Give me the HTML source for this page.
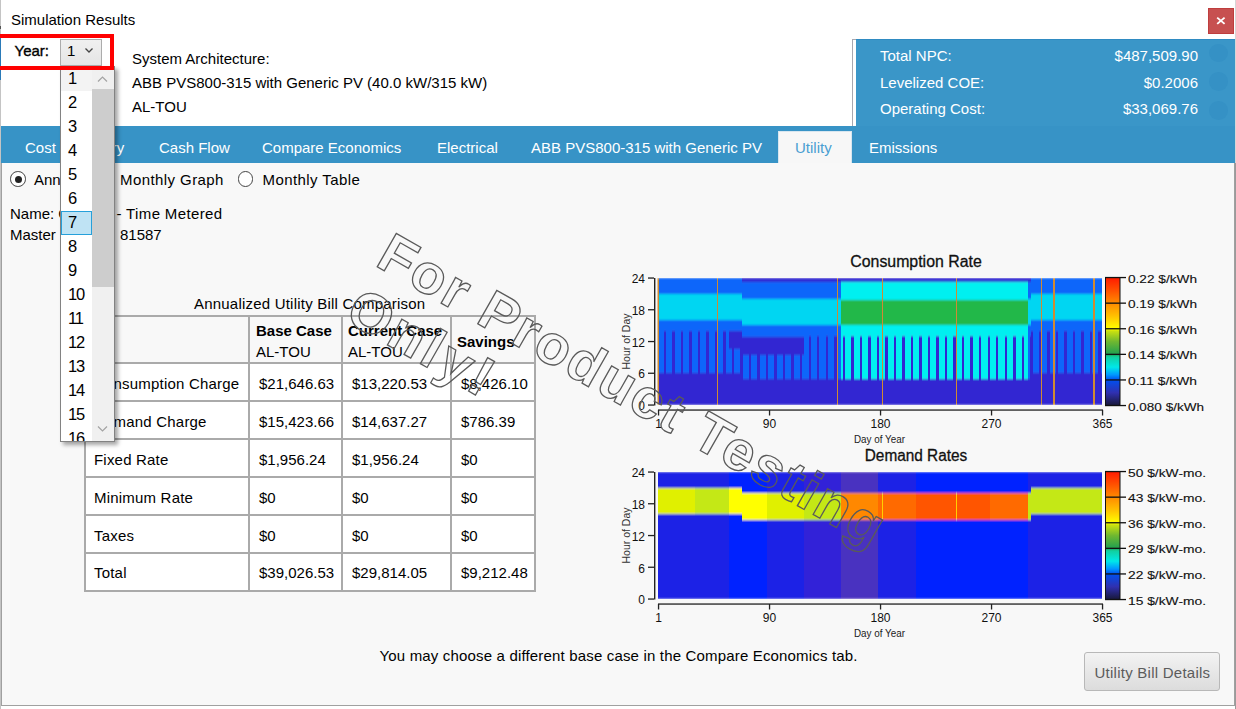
<!DOCTYPE html>
<html><head><meta charset="utf-8">
<style>
html,body{margin:0;padding:0;}
body{width:1236px;height:709px;overflow:hidden;position:relative;background:#fff;font-family:"Liberation Sans",sans-serif;font-size:15px;color:#000;}
.a{position:absolute;white-space:nowrap;line-height:15px;}
.w{color:#fff;}
</style></head><body>
<div style="position:absolute;left:0px;top:0px;width:1px;height:709px;background:#c4c4c4;"></div>
<div style="position:absolute;left:1235px;top:0px;width:1px;height:163px;background:#d6d6d6;"></div>
<div style="position:absolute;left:1235px;top:163px;width:1px;height:546px;background:#9a9a9a;"></div>
<div style="position:absolute;left:0px;top:34px;width:1px;height:46px;background:#2a7ab8;"></div>
<div style="position:absolute;left:0px;top:26px;width:1px;height:3px;background:#555;"></div>
<div class="a" style="left:11px;top:11.8px;font-size:15px;line-height:15px;">Simulation Results</div>
<div style="position:absolute;left:1208px;top:8px;width:24px;height:24px;background:#c75050;border:1px solid #bf3d3d;"></div>
<svg style="position:absolute;left:1216px;top:16px" width="10" height="10"><path d="M1.2 1.6L8.6 7.9M8.6 1.6L1.2 7.9" stroke="#fff" stroke-width="1.9"/></svg>
<div style="position:absolute;left:852px;top:39px;width:1px;height:87px;background:#a8a8b0;"></div>
<div style="position:absolute;left:852px;top:39px;width:4px;height:1px;background:#a8a8b0;"></div>
<div style="position:absolute;left:856px;top:39px;width:379px;height:87px;background:#3a96c8;border-top:1px solid #2f8bc2;box-sizing:border-box;"></div>
<div class="a" style="left:880px;top:48.3px;font-size:15px;line-height:15px;color:#fff;">Total NPC:</div>
<div class="a" style="right:38px;top:48.3px;font-size:15px;line-height:15px;color:#fff;">$487,509.90</div>
<div class="a" style="left:880px;top:74.8px;font-size:15px;line-height:15px;color:#fff;">Levelized COE:</div>
<div class="a" style="right:38px;top:74.8px;font-size:15px;line-height:15px;color:#fff;">$0.2006</div>
<div class="a" style="left:880px;top:101.3px;font-size:15px;line-height:15px;color:#fff;">Operating Cost:</div>
<div class="a" style="right:38px;top:101.3px;font-size:15px;line-height:15px;color:#fff;">$33,069.76</div>
<div style="position:absolute;left:1209.3px;top:43.7px;width:18.6px;height:18.6px;border-radius:50%;background:#3591c5"></div>
<div style="position:absolute;left:1209.3px;top:72.4px;width:18.6px;height:18.6px;border-radius:50%;background:#3591c5"></div>
<div style="position:absolute;left:1209.3px;top:101.1px;width:18.6px;height:18.6px;border-radius:50%;background:#3591c5"></div>
<div class="a" style="left:132px;top:51.3px;font-size:15px;line-height:15px;">System Architecture:</div>
<div class="a" style="left:132px;top:75.3px;font-size:15px;line-height:15px;">ABB PVS800-315 with Generic PV (40.0 kW/315 kW)</div>
<div class="a" style="left:132px;top:98.8px;font-size:15px;line-height:15px;">AL-TOU</div>
<div style="position:absolute;left:1px;top:126px;width:1234px;height:37px;background:#3793c6;"></div>
<div class="a" style="left:25px;top:140.3px;font-size:15px;line-height:15px;color:#fff;">Cost Summary</div>
<div class="a" style="left:159px;top:140.3px;font-size:15px;line-height:15px;color:#fff;">Cash Flow</div>
<div class="a" style="left:262px;top:140.3px;font-size:15px;line-height:15px;color:#fff;">Compare Economics</div>
<div class="a" style="left:437px;top:140.3px;font-size:15px;line-height:15px;color:#fff;">Electrical</div>
<div class="a" style="left:531px;top:140.3px;font-size:15px;line-height:15px;color:#fff;">ABB PVS800-315 with Generic PV</div>
<div class="a" style="left:869px;top:140.3px;font-size:15px;line-height:15px;color:#fff;">Emissions</div>
<div style="position:absolute;left:778px;top:131px;width:74px;height:32px;background:#f7f7f7;border:1px solid #d8e6ef;border-bottom:none;box-sizing:border-box;"></div>
<div class="a" style="left:795px;top:140.3px;font-size:15px;line-height:15px;color:#4a9fd2;">Utility</div>
<div style="position:absolute;left:1px;top:163px;width:1234px;height:543px;background:#f8f8f8;border-right:1px solid #a0a0a0;border-bottom:1px solid #a0a0a0;border-left:1px solid #a0a0a0;box-sizing:border-box;"></div>
<div style="position:absolute;left:10.2px;top:171.2px;width:13.6px;height:13.6px;border:1px solid #444;border-radius:50%;background:#fff"></div>
<div style="position:absolute;left:14.5px;top:175.5px;width:7px;height:7px;border-radius:50%;background:#222"></div>
<div class="a" style="left:34px;top:171.8px;font-size:15px;line-height:15px;">Annualized</div>
<div style="position:absolute;left:96.2px;top:171.2px;width:13.6px;height:13.6px;border:1px solid #444;border-radius:50%;background:#fff"></div>
<div class="a" style="left:120px;top:171.8px;font-size:15px;line-height:15px;letter-spacing:0.42px;">Monthly Graph</div>
<div style="position:absolute;left:237.7px;top:171.2px;width:13.6px;height:13.6px;border:1px solid #444;border-radius:50%;background:#fff"></div>
<div class="a" style="left:262.5px;top:171.8px;font-size:15px;line-height:15px;letter-spacing:0.42px;">Monthly Table</div>
<div class="a" style="left:10px;top:205.8px;font-size:15px;line-height:15px;">Name: General</div>
<div class="a" style="left:116.5px;top:205.8px;font-size:15px;line-height:15px;letter-spacing:0.36px;">- Time Metered</div>
<div class="a" style="left:10px;top:226.8px;font-size:15px;line-height:15px;">Master ID</div>
<div class="a" style="left:120px;top:226.8px;font-size:15px;line-height:15px;">81587</div>
<div class="a" style="left:194px;top:295.8px;font-size:15px;line-height:15px;letter-spacing:0.21px;">Annualized Utility Bill Comparison</div>
<div style="position:absolute;left:84px;top:315px;width:452px;height:277px;background:#fff;border:2px solid #aaa;box-sizing:border-box;"></div>
<div style="position:absolute;left:86px;top:317px;width:448px;height:45px;background:#f8f8f8;"></div>
<div style="position:absolute;left:248px;top:315px;width:2px;height:277px;background:#aaa;"></div>
<div style="position:absolute;left:341px;top:315px;width:2px;height:277px;background:#aaa;"></div>
<div style="position:absolute;left:450px;top:315px;width:2px;height:277px;background:#aaa;"></div>
<div style="position:absolute;left:84px;top:362px;width:452px;height:2px;background:#aaa;"></div>
<div style="position:absolute;left:84px;top:400px;width:452px;height:2px;background:#aaa;"></div>
<div style="position:absolute;left:84px;top:438px;width:452px;height:2px;background:#aaa;"></div>
<div style="position:absolute;left:84px;top:476px;width:452px;height:2px;background:#aaa;"></div>
<div style="position:absolute;left:84px;top:514px;width:452px;height:2px;background:#aaa;"></div>
<div style="position:absolute;left:84px;top:552px;width:452px;height:2px;background:#aaa;"></div>
<div class="a" style="left:256px;top:322.8px;font-size:15px;line-height:15px;font-weight:bold;">Base Case</div>
<div class="a" style="left:256px;top:343.8px;font-size:15px;line-height:15px;">AL-TOU</div>
<div class="a" style="left:348px;top:322.8px;font-size:15px;line-height:15px;font-weight:bold;">Current Case</div>
<div class="a" style="left:348px;top:343.8px;font-size:15px;line-height:15px;">AL-TOU</div>
<div class="a" style="left:457px;top:333.8px;font-size:15px;line-height:15px;font-weight:bold;">Savings</div>
<div class="a" style="left:94px;top:375.9px;font-size:15px;line-height:15px;letter-spacing:0.2px;">Consumption Charge</div>
<div class="a" style="left:259px;top:375.9px;font-size:15px;line-height:15px;">$21,646.63</div>
<div class="a" style="left:352px;top:375.9px;font-size:15px;line-height:15px;">$13,220.53</div>
<div class="a" style="left:461px;top:375.9px;font-size:15px;line-height:15px;">$8,426.10</div>
<div class="a" style="left:94px;top:413.8px;font-size:15px;line-height:15px;letter-spacing:0.2px;">Demand Charge</div>
<div class="a" style="left:259px;top:413.8px;font-size:15px;line-height:15px;">$15,423.66</div>
<div class="a" style="left:352px;top:413.8px;font-size:15px;line-height:15px;">$14,637.27</div>
<div class="a" style="left:461px;top:413.8px;font-size:15px;line-height:15px;">$786.39</div>
<div class="a" style="left:94px;top:451.7px;font-size:15px;line-height:15px;letter-spacing:0.2px;">Fixed Rate</div>
<div class="a" style="left:259px;top:451.7px;font-size:15px;line-height:15px;">$1,956.24</div>
<div class="a" style="left:352px;top:451.7px;font-size:15px;line-height:15px;">$1,956.24</div>
<div class="a" style="left:461px;top:451.7px;font-size:15px;line-height:15px;">$0</div>
<div class="a" style="left:94px;top:489.6px;font-size:15px;line-height:15px;letter-spacing:0.2px;">Minimum Rate</div>
<div class="a" style="left:259px;top:489.6px;font-size:15px;line-height:15px;">$0</div>
<div class="a" style="left:352px;top:489.6px;font-size:15px;line-height:15px;">$0</div>
<div class="a" style="left:461px;top:489.6px;font-size:15px;line-height:15px;">$0</div>
<div class="a" style="left:94px;top:527.5px;font-size:15px;line-height:15px;letter-spacing:0.2px;">Taxes</div>
<div class="a" style="left:259px;top:527.5px;font-size:15px;line-height:15px;">$0</div>
<div class="a" style="left:352px;top:527.5px;font-size:15px;line-height:15px;">$0</div>
<div class="a" style="left:461px;top:527.5px;font-size:15px;line-height:15px;">$0</div>
<div class="a" style="left:94px;top:565.4px;font-size:15px;line-height:15px;letter-spacing:0.2px;">Total</div>
<div class="a" style="left:259px;top:565.4px;font-size:15px;line-height:15px;">$39,026.53</div>
<div class="a" style="left:352px;top:565.4px;font-size:15px;line-height:15px;">$29,814.05</div>
<div class="a" style="left:461px;top:565.4px;font-size:15px;line-height:15px;">$9,212.48</div>
<div class="a" style="left:379.5px;top:648.1px;font-size:15px;line-height:15px;letter-spacing:0.17px;">You may choose a different base case in the Compare Economics tab.</div>
<div style="position:absolute;left:1084px;top:652px;width:136px;height:39px;background:linear-gradient(#f3f3f3,#dcdcdc);border:1px solid #b8b8b8;border-radius:3px;box-sizing:border-box;"></div>
<div class="a" style="left:1094.5px;top:664.8px;font-size:15px;line-height:15px;color:#5c5c5c;letter-spacing:0.25px;">Utility Bill Details</div>
<svg style="position:absolute;left:0;top:0" width="1236" height="709" font-family="Liberation Sans">
<defs><linearGradient id="cg" x1="0" y1="0" x2="0" y2="1">
<stop offset="0" stop-color="#ff1a00"/>
<stop offset="0.1" stop-color="#ff5000"/>
<stop offset="0.2" stop-color="#ff8a00"/>
<stop offset="0.3" stop-color="#ffc000"/>
<stop offset="0.4" stop-color="#ffff00"/>
<stop offset="0.42" stop-color="#c8e010"/>
<stop offset="0.5" stop-color="#70b830"/>
<stop offset="0.6" stop-color="#20a050"/>
<stop offset="0.62" stop-color="#10d0a0"/>
<stop offset="0.7" stop-color="#00e8e8"/>
<stop offset="0.76" stop-color="#0098ff"/>
<stop offset="0.8" stop-color="#0050f0"/>
<stop offset="0.9" stop-color="#3030b0"/>
<stop offset="1" stop-color="#181838"/>
</linearGradient></defs>
<defs><filter id="bl" x="-5%" y="-5%" width="110%" height="110%"><feGaussianBlur stdDeviation="0.3 1.3"/></filter><clipPath id="c1"><rect x="657.5" y="278" width="444.5" height="127"/></clipPath><clipPath id="c2"><rect x="657.5" y="472" width="444.5" height="127"/></clipPath></defs>
<g clip-path="url(#c1)"><g filter="url(#bl)" shape-rendering="crispEdges">
<rect x="657.50" y="373.25" width="71.85" height="31.75" fill="#3028d2"/>
<rect x="657.50" y="330.92" width="71.85" height="42.33" fill="#0866fa"/>
<rect x="657.50" y="320.33" width="71.85" height="10.58" fill="#0866fa"/>
<rect x="657.50" y="293.88" width="71.85" height="26.46" fill="#00d6f2"/>
<rect x="657.50" y="278.00" width="71.85" height="15.88" fill="#0866fa"/>
<rect x="663.59" y="330.92" width="2.44" height="42.33" fill="#3028d2"/>
<rect x="672.11" y="330.92" width="2.44" height="42.33" fill="#3028d2"/>
<rect x="680.64" y="330.92" width="2.44" height="42.33" fill="#3028d2"/>
<rect x="689.16" y="330.92" width="2.44" height="42.33" fill="#3028d2"/>
<rect x="697.69" y="330.92" width="2.44" height="42.33" fill="#3028d2"/>
<rect x="706.21" y="330.92" width="2.44" height="42.33" fill="#3028d2"/>
<rect x="714.74" y="330.92" width="2.44" height="42.33" fill="#3028d2"/>
<rect x="723.26" y="330.92" width="2.44" height="42.33" fill="#3028d2"/>
<rect x="729.35" y="373.25" width="12.18" height="31.75" fill="#3028d2"/>
<rect x="729.35" y="349.44" width="12.18" height="23.81" fill="#0866fa"/>
<rect x="729.35" y="330.92" width="12.18" height="18.52" fill="#3028d2"/>
<rect x="729.35" y="320.33" width="12.18" height="10.58" fill="#0866fa"/>
<rect x="729.35" y="293.88" width="12.18" height="26.46" fill="#00d6f2"/>
<rect x="729.35" y="278.00" width="12.18" height="15.88" fill="#0866fa"/>
<rect x="731.79" y="349.44" width="2.44" height="23.81" fill="#3028d2"/>
<rect x="740.31" y="349.44" width="1.22" height="23.81" fill="#3028d2"/>
<rect x="741.53" y="378.54" width="62.11" height="26.46" fill="#3028d2"/>
<rect x="741.53" y="354.73" width="62.11" height="23.81" fill="#0866fa"/>
<rect x="741.53" y="337.27" width="62.11" height="17.46" fill="#3028d2"/>
<rect x="741.53" y="324.57" width="62.11" height="12.70" fill="#0866fa"/>
<rect x="741.53" y="299.17" width="62.11" height="25.40" fill="#00d6f2"/>
<rect x="741.53" y="282.23" width="62.11" height="16.93" fill="#0866fa"/>
<rect x="741.53" y="278.00" width="62.11" height="4.23" fill="#3028d2"/>
<rect x="741.53" y="354.73" width="1.22" height="23.81" fill="#3028d2"/>
<rect x="748.84" y="354.73" width="2.44" height="23.81" fill="#3028d2"/>
<rect x="757.36" y="354.73" width="2.44" height="23.81" fill="#3028d2"/>
<rect x="765.88" y="354.73" width="2.44" height="23.81" fill="#3028d2"/>
<rect x="774.41" y="354.73" width="2.44" height="23.81" fill="#3028d2"/>
<rect x="782.93" y="354.73" width="2.44" height="23.81" fill="#3028d2"/>
<rect x="791.46" y="354.73" width="2.44" height="23.81" fill="#3028d2"/>
<rect x="799.98" y="354.73" width="2.44" height="23.81" fill="#3028d2"/>
<rect x="803.64" y="378.54" width="37.75" height="26.46" fill="#3028d2"/>
<rect x="803.64" y="336.21" width="37.75" height="42.33" fill="#0866fa"/>
<rect x="803.64" y="324.57" width="37.75" height="11.64" fill="#0866fa"/>
<rect x="803.64" y="299.17" width="37.75" height="25.40" fill="#00d6f2"/>
<rect x="803.64" y="282.23" width="37.75" height="16.93" fill="#0866fa"/>
<rect x="803.64" y="278.00" width="37.75" height="4.23" fill="#3028d2"/>
<rect x="808.51" y="336.21" width="2.44" height="42.33" fill="#3028d2"/>
<rect x="817.03" y="336.21" width="2.44" height="42.33" fill="#3028d2"/>
<rect x="825.56" y="336.21" width="2.44" height="42.33" fill="#3028d2"/>
<rect x="834.08" y="336.21" width="2.44" height="42.33" fill="#3028d2"/>
<rect x="841.39" y="378.54" width="186.32" height="26.46" fill="#3028d2"/>
<rect x="841.39" y="336.21" width="186.32" height="42.33" fill="#00f0f0"/>
<rect x="841.39" y="324.57" width="186.32" height="11.64" fill="#00f0f0"/>
<rect x="841.39" y="299.70" width="186.32" height="24.87" fill="#22b84a"/>
<rect x="841.39" y="282.23" width="186.32" height="17.46" fill="#00f0f0"/>
<rect x="841.39" y="278.00" width="186.32" height="4.23" fill="#3028d2"/>
<rect x="842.61" y="336.21" width="2.44" height="42.33" fill="#3028d2"/>
<rect x="851.13" y="336.21" width="2.44" height="42.33" fill="#3028d2"/>
<rect x="859.66" y="336.21" width="2.44" height="42.33" fill="#3028d2"/>
<rect x="868.18" y="336.21" width="2.44" height="42.33" fill="#3028d2"/>
<rect x="876.71" y="336.21" width="2.44" height="42.33" fill="#3028d2"/>
<rect x="885.23" y="336.21" width="2.44" height="42.33" fill="#3028d2"/>
<rect x="893.75" y="336.21" width="2.44" height="42.33" fill="#3028d2"/>
<rect x="902.28" y="336.21" width="2.44" height="42.33" fill="#3028d2"/>
<rect x="910.80" y="336.21" width="2.44" height="42.33" fill="#3028d2"/>
<rect x="919.33" y="336.21" width="2.44" height="42.33" fill="#3028d2"/>
<rect x="927.85" y="336.21" width="2.44" height="42.33" fill="#3028d2"/>
<rect x="936.38" y="336.21" width="2.44" height="42.33" fill="#3028d2"/>
<rect x="944.90" y="336.21" width="2.44" height="42.33" fill="#3028d2"/>
<rect x="953.43" y="336.21" width="2.44" height="42.33" fill="#3028d2"/>
<rect x="961.95" y="336.21" width="2.44" height="42.33" fill="#3028d2"/>
<rect x="970.48" y="336.21" width="2.44" height="42.33" fill="#3028d2"/>
<rect x="979.00" y="336.21" width="2.44" height="42.33" fill="#3028d2"/>
<rect x="987.53" y="336.21" width="2.44" height="42.33" fill="#3028d2"/>
<rect x="996.05" y="336.21" width="2.44" height="42.33" fill="#3028d2"/>
<rect x="1004.58" y="336.21" width="2.44" height="42.33" fill="#3028d2"/>
<rect x="1013.10" y="336.21" width="2.44" height="42.33" fill="#3028d2"/>
<rect x="1021.62" y="336.21" width="2.44" height="42.33" fill="#3028d2"/>
<rect x="1027.71" y="378.54" width="3.65" height="26.46" fill="#3028d2"/>
<rect x="1027.71" y="336.21" width="3.65" height="42.33" fill="#0866fa"/>
<rect x="1027.71" y="324.57" width="3.65" height="11.64" fill="#0866fa"/>
<rect x="1027.71" y="299.17" width="3.65" height="25.40" fill="#00d6f2"/>
<rect x="1027.71" y="282.23" width="3.65" height="16.93" fill="#0866fa"/>
<rect x="1027.71" y="278.00" width="3.65" height="4.23" fill="#3028d2"/>
<rect x="1030.15" y="336.21" width="1.22" height="42.33" fill="#3028d2"/>
<rect x="1031.37" y="373.25" width="70.63" height="31.75" fill="#3028d2"/>
<rect x="1031.37" y="330.92" width="70.63" height="42.33" fill="#0866fa"/>
<rect x="1031.37" y="320.33" width="70.63" height="10.58" fill="#0866fa"/>
<rect x="1031.37" y="293.88" width="70.63" height="26.46" fill="#00d6f2"/>
<rect x="1031.37" y="278.00" width="70.63" height="15.88" fill="#0866fa"/>
<rect x="1031.37" y="330.92" width="1.22" height="42.33" fill="#3028d2"/>
<rect x="1038.67" y="330.92" width="2.44" height="42.33" fill="#3028d2"/>
<rect x="1047.20" y="330.92" width="2.44" height="42.33" fill="#3028d2"/>
<rect x="1055.72" y="330.92" width="2.44" height="42.33" fill="#3028d2"/>
<rect x="1064.25" y="330.92" width="2.44" height="42.33" fill="#3028d2"/>
<rect x="1072.77" y="330.92" width="2.44" height="42.33" fill="#3028d2"/>
<rect x="1081.30" y="330.92" width="2.44" height="42.33" fill="#3028d2"/>
<rect x="1089.82" y="330.92" width="2.44" height="42.33" fill="#3028d2"/>
<rect x="1098.35" y="330.92" width="2.44" height="42.33" fill="#3028d2"/>
<rect x="657.48" y="278" width="1.25" height="127" fill="#d08a30"/>
<rect x="717.16" y="278" width="1.25" height="127" fill="#d08a30"/>
<rect x="836.50" y="278" width="1.25" height="127" fill="#d08a30"/>
<rect x="881.56" y="278" width="1.25" height="127" fill="#d08a30"/>
<rect x="955.85" y="278" width="1.25" height="127" fill="#d08a30"/>
<rect x="1041.09" y="278" width="1.25" height="127" fill="#d08a30"/>
<rect x="1053.27" y="278" width="1.25" height="127" fill="#d08a30"/>
<rect x="1093.46" y="278" width="1.25" height="127" fill="#d08a30"/>
</g></g>
<text x="916" y="267.2" font-size="16" text-anchor="middle" textLength="131.5" lengthAdjust="spacingAndGlyphs" fill="#111" stroke="#111" stroke-width="0.3">Consumption Rate</text>
<rect x="654" y="278" width="1.4" height="127.5" fill="#222"/>
<rect x="648" y="404.4" width="6" height="1.3" fill="#222"/>
<text x="645" y="410.2" font-size="12" text-anchor="end" fill="#111">0</text>
<rect x="648" y="372.6" width="6" height="1.3" fill="#222"/>
<text x="645" y="378.4" font-size="12" text-anchor="end" fill="#111">6</text>
<rect x="648" y="340.9" width="6" height="1.3" fill="#222"/>
<text x="645" y="346.7" font-size="12" text-anchor="end" fill="#111">12</text>
<rect x="648" y="309.1" width="6" height="1.3" fill="#222"/>
<text x="645" y="314.9" font-size="12" text-anchor="end" fill="#111">18</text>
<rect x="648" y="277.4" width="6" height="1.3" fill="#222"/>
<text x="645" y="283.2" font-size="12" text-anchor="end" fill="#111">24</text>
<text x="630" y="341.5" font-size="10.5" text-anchor="middle" fill="#333" transform="rotate(-90 630 341.5)" textLength="56" lengthAdjust="spacingAndGlyphs">Hour of Day</text>
<rect x="658" y="409.4" width="445" height="1.3" fill="#222"/>
<rect x="657.9" y="410" width="1.3" height="5.5" fill="#222"/>
<text x="658.5" y="428.0" font-size="12" text-anchor="middle" fill="#111">1</text>
<rect x="768.9" y="410" width="1.3" height="5.5" fill="#222"/>
<text x="769.5" y="428.0" font-size="12" text-anchor="middle" fill="#111">90</text>
<rect x="879.9" y="410" width="1.3" height="5.5" fill="#222"/>
<text x="880.5" y="428.0" font-size="12" text-anchor="middle" fill="#111">180</text>
<rect x="990.9" y="410" width="1.3" height="5.5" fill="#222"/>
<text x="991.5" y="428.0" font-size="12" text-anchor="middle" fill="#111">270</text>
<rect x="1101.9" y="410" width="1.3" height="5.5" fill="#222"/>
<text x="1102.5" y="428.0" font-size="12" text-anchor="middle" fill="#111">365</text>
<text x="879.5" y="442.8" font-size="10.5" text-anchor="middle" fill="#222" textLength="51" lengthAdjust="spacingAndGlyphs">Day of Year</text>
<rect x="1105.5" y="277.5" width="14.5" height="128" fill="url(#cg)" stroke="#111" stroke-width="1"/>
<rect x="1105" y="276.9" width="21" height="1.3" fill="#111"/>
<text x="1128" y="282.5" font-size="11.6" stroke="#111" stroke-width="0.12" fill="#111" textLength="69" lengthAdjust="spacingAndGlyphs">0.22 $/kWh</text>
<rect x="1105" y="302.5" width="21" height="1.3" fill="#111"/>
<text x="1128" y="308.1" font-size="11.6" stroke="#111" stroke-width="0.12" fill="#111" textLength="69" lengthAdjust="spacingAndGlyphs">0.19 $/kWh</text>
<rect x="1105" y="328.1" width="21" height="1.3" fill="#111"/>
<text x="1128" y="333.7" font-size="11.6" stroke="#111" stroke-width="0.12" fill="#111" textLength="69" lengthAdjust="spacingAndGlyphs">0.16 $/kWh</text>
<rect x="1105" y="353.7" width="21" height="1.3" fill="#111"/>
<text x="1128" y="359.3" font-size="11.6" stroke="#111" stroke-width="0.12" fill="#111" textLength="69" lengthAdjust="spacingAndGlyphs">0.14 $/kWh</text>
<rect x="1105" y="379.3" width="21" height="1.3" fill="#111"/>
<text x="1128" y="384.9" font-size="11.6" stroke="#111" stroke-width="0.12" fill="#111" textLength="69" lengthAdjust="spacingAndGlyphs">0.11 $/kWh</text>
<rect x="1105" y="404.9" width="21" height="1.3" fill="#111"/>
<text x="1128" y="410.5" font-size="11.6" stroke="#111" stroke-width="0.12" fill="#111" textLength="76" lengthAdjust="spacingAndGlyphs">0.080 $/kWh</text>
<g clip-path="url(#c2)"><g filter="url(#bl)" shape-rendering="crispEdges">
<rect x="657.50" y="472.00" width="71.85" height="127.00" fill="#1c22e6"/>
<rect x="729.35" y="472.00" width="37.75" height="127.00" fill="#0020ff"/>
<rect x="767.10" y="472.00" width="36.53" height="127.00" fill="#1c22e6"/>
<rect x="803.64" y="472.00" width="37.75" height="127.00" fill="#3024d8"/>
<rect x="841.39" y="472.00" width="36.53" height="127.00" fill="#4830c0"/>
<rect x="877.92" y="472.00" width="37.75" height="127.00" fill="#1c22e6"/>
<rect x="915.68" y="472.00" width="112.04" height="127.00" fill="#0020ff"/>
<rect x="1027.71" y="472.00" width="74.29" height="127.00" fill="#1c22e6"/>
<rect x="657.50" y="487.88" width="37.75" height="26.46" fill="#e0f000"/>
<rect x="695.25" y="487.88" width="34.10" height="26.46" fill="#c4e814"/>
<rect x="729.35" y="487.88" width="12.18" height="26.46" fill="#ffff00"/>
<rect x="741.53" y="493.17" width="25.57" height="26.46" fill="#ffff00"/>
<rect x="767.10" y="493.17" width="36.53" height="26.46" fill="#e0f000"/>
<rect x="803.64" y="493.17" width="37.75" height="26.46" fill="#c4e814"/>
<rect x="841.39" y="493.17" width="36.53" height="26.46" fill="#ff8800"/>
<rect x="877.92" y="493.17" width="37.75" height="26.46" fill="#ff6a00"/>
<rect x="915.68" y="493.17" width="74.29" height="26.46" fill="#ff5500"/>
<rect x="989.96" y="493.17" width="37.75" height="26.46" fill="#ff6a00"/>
<rect x="1027.71" y="493.17" width="3.65" height="26.46" fill="#c4e814"/>
<rect x="1031.37" y="487.88" width="70.63" height="26.46" fill="#c4e814"/>
<rect x="881.59" y="493.17" width="1.20" height="26.46" fill="#ffd000"/>
<rect x="955.87" y="493.17" width="1.20" height="26.46" fill="#ffd000"/>
</g></g>
<text x="916" y="461.4" font-size="16" text-anchor="middle" textLength="102.5" lengthAdjust="spacingAndGlyphs" fill="#111" stroke="#111" stroke-width="0.3">Demand Rates</text>
<rect x="654" y="472" width="1.4" height="127.5" fill="#222"/>
<rect x="648" y="598.4" width="6" height="1.3" fill="#222"/>
<text x="645" y="604.2" font-size="12" text-anchor="end" fill="#111">0</text>
<rect x="648" y="566.6" width="6" height="1.3" fill="#222"/>
<text x="645" y="572.5" font-size="12" text-anchor="end" fill="#111">6</text>
<rect x="648" y="534.9" width="6" height="1.3" fill="#222"/>
<text x="645" y="540.7" font-size="12" text-anchor="end" fill="#111">12</text>
<rect x="648" y="503.1" width="6" height="1.3" fill="#222"/>
<text x="645" y="508.9" font-size="12" text-anchor="end" fill="#111">18</text>
<rect x="648" y="471.4" width="6" height="1.3" fill="#222"/>
<text x="645" y="477.2" font-size="12" text-anchor="end" fill="#111">24</text>
<text x="630" y="535.5" font-size="10.5" text-anchor="middle" fill="#333" transform="rotate(-90 630 535.5)" textLength="56" lengthAdjust="spacingAndGlyphs">Hour of Day</text>
<rect x="658" y="603.4" width="445" height="1.3" fill="#222"/>
<rect x="657.9" y="604" width="1.3" height="5.5" fill="#222"/>
<text x="658.5" y="622.0" font-size="12" text-anchor="middle" fill="#111">1</text>
<rect x="768.9" y="604" width="1.3" height="5.5" fill="#222"/>
<text x="769.5" y="622.0" font-size="12" text-anchor="middle" fill="#111">90</text>
<rect x="879.9" y="604" width="1.3" height="5.5" fill="#222"/>
<text x="880.5" y="622.0" font-size="12" text-anchor="middle" fill="#111">180</text>
<rect x="990.9" y="604" width="1.3" height="5.5" fill="#222"/>
<text x="991.5" y="622.0" font-size="12" text-anchor="middle" fill="#111">270</text>
<rect x="1101.9" y="604" width="1.3" height="5.5" fill="#222"/>
<text x="1102.5" y="622.0" font-size="12" text-anchor="middle" fill="#111">365</text>
<text x="879.5" y="636.8" font-size="10.5" text-anchor="middle" fill="#222" textLength="51" lengthAdjust="spacingAndGlyphs">Day of Year</text>
<rect x="1105.5" y="471.5" width="14.5" height="128" fill="url(#cg)" stroke="#111" stroke-width="1"/>
<rect x="1105" y="470.9" width="21" height="1.3" fill="#111"/>
<text x="1128" y="476.5" font-size="11.6" stroke="#111" stroke-width="0.12" fill="#111" textLength="78" lengthAdjust="spacingAndGlyphs">50 $/kW-mo.</text>
<rect x="1105" y="496.5" width="21" height="1.3" fill="#111"/>
<text x="1128" y="502.1" font-size="11.6" stroke="#111" stroke-width="0.12" fill="#111" textLength="78" lengthAdjust="spacingAndGlyphs">43 $/kW-mo.</text>
<rect x="1105" y="522.1" width="21" height="1.3" fill="#111"/>
<text x="1128" y="527.7" font-size="11.6" stroke="#111" stroke-width="0.12" fill="#111" textLength="78" lengthAdjust="spacingAndGlyphs">36 $/kW-mo.</text>
<rect x="1105" y="547.7" width="21" height="1.3" fill="#111"/>
<text x="1128" y="553.3" font-size="11.6" stroke="#111" stroke-width="0.12" fill="#111" textLength="78" lengthAdjust="spacingAndGlyphs">29 $/kW-mo.</text>
<rect x="1105" y="573.3" width="21" height="1.3" fill="#111"/>
<text x="1128" y="578.9" font-size="11.6" stroke="#111" stroke-width="0.12" fill="#111" textLength="78" lengthAdjust="spacingAndGlyphs">22 $/kW-mo.</text>
<rect x="1105" y="598.9" width="21" height="1.3" fill="#111"/>
<text x="1128" y="604.5" font-size="11.6" stroke="#111" stroke-width="0.12" fill="#111" textLength="78" lengthAdjust="spacingAndGlyphs">15 $/kW-mo.</text>
</svg>
<div class="a" style="left:14.5px;top:43.3px;font-size:15px;line-height:15px;-webkit-text-stroke:0.35px #000;">Year:</div>
<div style="position:absolute;left:60px;top:39px;width:42px;height:27px;background:linear-gradient(#f0f0f0,#e5e5e5);border:1px solid #acacac;box-sizing:border-box;"></div>
<div class="a" style="left:67px;top:43.3px;font-size:15px;line-height:15px;">1</div>
<svg style="position:absolute;left:84px;top:47px" width="10" height="8"><path d="M1.5 1.5L5 5L8.5 1.5" stroke="#444" stroke-width="1.3" fill="none"/></svg>
<div style="position:absolute;left:0;top:0;width:1236px;height:709px;"><div style="position:absolute;left:60px;top:66px;width:55px;height:376px;box-shadow:3px 3px 4px rgba(0,0,0,0.35);background:#fff"></div>
<div style="position:absolute;left:60px;top:66px;width:55px;height:376px;background:#fff;border:1px solid #828282;box-sizing:border-box;"></div>
<div style="position:absolute;left:61px;top:67px;width:31px;height:24px;background:#f3f3f3;"></div>
<div style="position:absolute;left:61px;top:211px;width:31px;height:24px;background:#bfe3f4;border:1px solid #26a0da;box-sizing:border-box;"></div>
<div style="position:absolute;left:61px;top:67px;width:31px;height:374px;overflow:hidden"><div class="a" style="left:7px;top:3.3px;font-size:16.5px;line-height:16.5px;letter-spacing:-1.2px;">1</div>
<div class="a" style="left:7px;top:27.3px;font-size:16.5px;line-height:16.5px;letter-spacing:-1.2px;">2</div>
<div class="a" style="left:7px;top:51.3px;font-size:16.5px;line-height:16.5px;letter-spacing:-1.2px;">3</div>
<div class="a" style="left:7px;top:75.3px;font-size:16.5px;line-height:16.5px;letter-spacing:-1.2px;">4</div>
<div class="a" style="left:7px;top:99.3px;font-size:16.5px;line-height:16.5px;letter-spacing:-1.2px;">5</div>
<div class="a" style="left:7px;top:123.3px;font-size:16.5px;line-height:16.5px;letter-spacing:-1.2px;">6</div>
<div class="a" style="left:7px;top:147.3px;font-size:16.5px;line-height:16.5px;letter-spacing:-1.2px;">7</div>
<div class="a" style="left:7px;top:171.3px;font-size:16.5px;line-height:16.5px;letter-spacing:-1.2px;">8</div>
<div class="a" style="left:7px;top:195.3px;font-size:16.5px;line-height:16.5px;letter-spacing:-1.2px;">9</div>
<div class="a" style="left:7px;top:219.3px;font-size:16.5px;line-height:16.5px;letter-spacing:-1.2px;">10</div>
<div class="a" style="left:7px;top:243.3px;font-size:16.5px;line-height:16.5px;letter-spacing:-1.2px;">11</div>
<div class="a" style="left:7px;top:267.3px;font-size:16.5px;line-height:16.5px;letter-spacing:-1.2px;">12</div>
<div class="a" style="left:7px;top:291.3px;font-size:16.5px;line-height:16.5px;letter-spacing:-1.2px;">13</div>
<div class="a" style="left:7px;top:315.3px;font-size:16.5px;line-height:16.5px;letter-spacing:-1.2px;">14</div>
<div class="a" style="left:7px;top:339.3px;font-size:16.5px;line-height:16.5px;letter-spacing:-1.2px;">15</div>
<div class="a" style="left:7px;top:363.3px;font-size:16.5px;line-height:16.5px;letter-spacing:-1.2px;">16</div>
</div><div style="position:absolute;left:92px;top:67px;width:22px;height:374px;background:#f0f0f0;"></div>
<div style="position:absolute;left:92px;top:89px;width:22px;height:198px;background:#cdcdcd;"></div>
<svg style="position:absolute;left:97px;top:75px" width="11" height="8"><path d="M1 6.5L5.5 2L10 6.5" stroke="#a3a3a3" stroke-width="1.2" fill="none"/></svg>
<svg style="position:absolute;left:97px;top:425px" width="11" height="8"><path d="M1 1.5L5.5 6L10 1.5" stroke="#a3a3a3" stroke-width="1.2" fill="none"/></svg>
</div><div style="position:absolute;left:-4px;top:34px;width:118px;height:36px;background:transparent;border:4px solid #f00;box-sizing:border-box;"></div>
<svg style="position:absolute;left:0;top:0" width="1236" height="709" font-family="Liberation Sans">
<g transform="translate(374.0,265.0) rotate(29.6)" fill="none" stroke="#5a5a5a" stroke-width="1.3" font-size="56" font-weight="bold">
<text x="0" y="0" textLength="572" lengthAdjust="spacing">For Product Testing</text>
<text x="0" y="63" textLength="158" lengthAdjust="spacing">Only!</text>
</g></svg>
</body></html>
